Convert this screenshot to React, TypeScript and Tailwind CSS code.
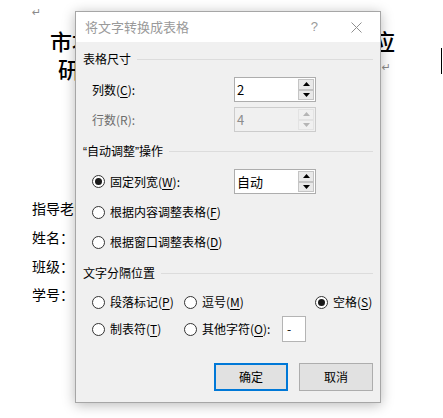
import React from "react";

const FONT = { fontFamily: '"Noto Sans CJK SC", "Noto Sans", sans-serif' };
const LATIN = { fontFamily: '"Liberation Sans", sans-serif' };

function Arrow({ up, color }: { up: boolean; color: string }) {
  return (
    <svg width="7" height="4" viewBox="0 0 7 4">
      {up ? <polygon points="0,4 7,4 3.5,0" fill={color} /> : <polygon points="0,0 7,0 3.5,4" fill={color} />}
    </svg>
  );
}

function Spin({ value, disabled }: { value: string; disabled?: boolean }) {
  const btn = disabled
    ? "flex-1 flex items-center justify-center border border-[#e3e3e3] bg-[#f0f0f0]"
    : "flex-1 flex items-center justify-center border border-[#c4c4c4] bg-[#e9e9e9]";
  return (
    <div
      className={`flex h-[25px] w-[82px] border ${disabled ? "border-[#cccccc] bg-[#f0f0f0]" : "border-[#adadad] bg-white"}`}
    >
      <div className={`flex flex-1 items-center pl-[2px] text-[13px] ${disabled ? "text-[#8d8d8d]" : "text-black"}`}>
        {value}
      </div>
      <div className="flex w-[17px] flex-col py-[1px] pr-[1px]">
        <div className={btn}>
          <Arrow up color={disabled ? "#b5b5b5" : "#000"} />
        </div>
        <div className={btn}>
          <Arrow up={false} color={disabled ? "#b5b5b5" : "#000"} />
        </div>
      </div>
    </div>
  );
}

function Radio({ checked }: { checked?: boolean }) {
  return (
    <span className="flex h-[13px] w-[13px] shrink-0 items-center justify-center rounded-full border border-[#333333] bg-white">
      {checked && <span className="h-[7px] w-[7px] rounded-full bg-[#1a1a1a]" />}
    </span>
  );
}

function Header({ children }: { children: React.ReactNode }) {
  return (
    <div className="flex h-[18px] items-center pl-[7px] pr-[7px] text-[12px] text-black">
      <span>{children}</span>
      <span className="ml-[6px] h-px flex-1 bg-[#dcdcdc]" />
    </div>
  );
}

function RadioLabel({ checked, children }: { checked?: boolean; children: React.ReactNode }) {
  return (
    <div className="flex items-center gap-[5px] text-[12px] text-black">
      <Radio checked={checked} />
      <span>{children}</span>
    </div>
  );
}

function U({ children }: { children: React.ReactNode }) {
  return <span className="underline underline-offset-2">{children}</span>;
}

export default function App() {
  return (
    <div className="relative h-[418px] w-[443px] overflow-hidden bg-white" style={FONT}>
      {/* document background */}
      <div className="flex flex-col pt-[6px]">
        <div className="h-[14px] pl-[32px] text-[11px] leading-[14px] text-[#8a8a8a]" style={{ fontFamily: '"DejaVu Sans", sans-serif' }}>
          ↵
        </div>
        <div className="mt-[6px] flex h-[28px] items-center pl-[50px] pr-[48px] text-[22px] font-medium text-black">
          <span>市場</span>
          <span className="ml-auto">应</span>
        </div>
        <div className="flex h-[28px] items-center pl-[58px] pr-[52px] text-[22px] font-medium text-black">
          <span>研</span>
          <span className="ml-auto text-[11px] font-normal text-[#8a8a8a]" style={{ fontFamily: '"DejaVu Sans", sans-serif' }}>
            ↵
          </span>
        </div>
        <div className="mt-[112px] flex flex-col pl-[32px] text-[14px] text-black">
          <div className="flex h-[29px] items-center">指导老师：</div>
          <div className="flex h-[29px] items-center">姓名：</div>
          <div className="flex h-[29px] items-center">班级：</div>
          <div className="flex h-[26px] items-center">学号：</div>
        </div>
      </div>

      {/* caret */}
      <div className="absolute left-[441px] top-[48px] h-[26px] w-px bg-black" />

      {/* dialog */}
      <div className="absolute left-[75px] top-[11px] flex h-[392px] w-[306px] flex-col border border-[#a6a6a6] bg-[#f0f0f0] shadow-[0_2px_12px_rgba(0,0,0,0.28)]">
        <div className="flex h-[30px] items-center bg-white pl-[9px] text-[13px] text-[#9a9a9a]">
          <span>将文字转换成表格</span>
          <span className="ml-auto mr-[33px] text-[13px] text-[#9a9a9a]" style={LATIN}>
            ?
          </span>
          <svg width="11" height="11" viewBox="0 0 11 11" className="mr-[18px]">
            <path d="M0.5 0.5 L10.5 10.5 M10.5 0.5 L0.5 10.5" stroke="#8f8f8f" strokeWidth="1" />
          </svg>
        </div>

        <div className="flex flex-1 flex-col">
          <div className="mt-[8px]">
            <Header>表格尺寸</Header>
          </div>
          <div className="mt-[9px] flex h-[25px] items-center pl-[16px] text-[12px] text-black">
            <span className="w-[142px]">
              列数(<U>C</U>):
            </span>
            <Spin value="2" />
          </div>
          <div className="mt-[5px] flex h-[25px] items-center pl-[16px] text-[12px] text-[#6d6d6d]">
            <span className="w-[142px]">行数(R):</span>
            <Spin value="4" disabled />
          </div>

          <div className="mt-[10px]">
            <Header>
              <span style={LATIN}>“</span>自动调整<span style={LATIN}>”</span>操作
            </Header>
          </div>
          <div className="mt-[9px] flex h-[25px] items-center pl-[16px]">
            <div className="w-[142px]">
              <RadioLabel checked>
                固定列宽(<U>W</U>):
              </RadioLabel>
            </div>
            <Spin value="自动" />
          </div>
          <div className="mt-[8px] flex h-[20px] items-center pl-[16px]">
            <RadioLabel>
              根据内容调整表格(<U>F</U>)
            </RadioLabel>
          </div>
          <div className="mt-[10px] flex h-[20px] items-center pl-[16px]">
            <RadioLabel>
              根据窗口调整表格(<U>D</U>)
            </RadioLabel>
          </div>

          <div className="mt-[12px]">
            <Header>文字分隔位置</Header>
          </div>
          <div className="mt-[10px] flex h-[20px] items-center pl-[16px]">
            <div className="w-[92px]">
              <RadioLabel>
                段落标记(<U>P</U>)
              </RadioLabel>
            </div>
            <div className="w-[131px]">
              <RadioLabel>
                逗号(<U>M</U>)
              </RadioLabel>
            </div>
            <RadioLabel checked>
              空格(<U>S</U>)
            </RadioLabel>
          </div>
          <div className="mt-[4px] flex h-[26px] items-center pl-[16px]">
            <div className="w-[92px]">
              <RadioLabel>
                制表符(<U>T</U>)
              </RadioLabel>
            </div>
            <div className="w-[98px]">
              <RadioLabel>
                其他字符(<U>O</U>):
              </RadioLabel>
            </div>
            <div className="flex h-[26px] w-[24px] items-center border border-[#b4b4b4] bg-white pl-[4px] text-[12px] text-black">
              -
            </div>
          </div>

          <div className="mt-[21px] flex justify-end gap-[11px] pr-[7px]">
            <button className="flex h-[28px] w-[74px] items-center justify-center border-2 border-[#0078d7] bg-[#e1e1e1] text-[12px] text-black">
              确定
            </button>
            <button className="flex h-[28px] w-[74px] items-center justify-center border border-[#adadad] bg-[#e1e1e1] text-[12px] text-black">
              取消
            </button>
          </div>
        </div>
      </div>
    </div>
  );
}
